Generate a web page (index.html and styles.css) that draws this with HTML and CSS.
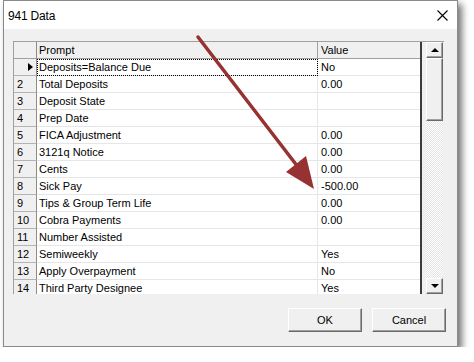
FILE: index.html
```html
<!DOCTYPE html>
<html lang="en">
<head>
  <meta charset="UTF-8">
  <title>941 Data</title>
  <link rel="stylesheet" href="styles.css">
</head>
<body>

  <div class="dialog">
    <div class="titlebar">
      <span class="title">941 Data</span>
      <svg class="close" width="11" height="11" viewBox="0 0 11 11">
        <path d="M0.5 0.5 L10.5 10.5 M10.5 0.5 L0.5 10.5" stroke="#000" stroke-width="1.1" fill="none"/>
      </svg>
    </div>

    <div class="dialog-body">
      <div class="grid">
        <div class="cells">
          <div class="row head">
            <div class="cell ind"></div>
            <div class="cell">Prompt</div>
            <div class="cell">Value</div>
          </div>
          <div class="row current">
            <div class="cell ind"><span class="pointer"></span></div>
            <div class="cell focus">Deposits=Balance Due</div>
            <div class="cell">No</div>
          </div>
          <div class="row"><div class="cell ind">2</div><div class="cell">Total Deposits</div><div class="cell">0.00</div></div>
          <div class="row"><div class="cell ind">3</div><div class="cell">Deposit State</div><div class="cell"></div></div>
          <div class="row"><div class="cell ind">4</div><div class="cell">Prep Date</div><div class="cell"></div></div>
          <div class="row"><div class="cell ind">5</div><div class="cell">FICA Adjustment</div><div class="cell">0.00</div></div>
          <div class="row"><div class="cell ind">6</div><div class="cell">3121q Notice</div><div class="cell">0.00</div></div>
          <div class="row"><div class="cell ind">7</div><div class="cell">Cents</div><div class="cell">0.00</div></div>
          <div class="row"><div class="cell ind">8</div><div class="cell">Sick Pay</div><div class="cell">-500.00</div></div>
          <div class="row"><div class="cell ind">9</div><div class="cell">Tips &amp; Group Term Life</div><div class="cell">0.00</div></div>
          <div class="row"><div class="cell ind">10</div><div class="cell">Cobra Payments</div><div class="cell">0.00</div></div>
          <div class="row"><div class="cell ind">11</div><div class="cell">Number Assisted</div><div class="cell"></div></div>
          <div class="row"><div class="cell ind">12</div><div class="cell">Semiweekly</div><div class="cell">Yes</div></div>
          <div class="row"><div class="cell ind">13</div><div class="cell">Apply Overpayment</div><div class="cell">No</div></div>
          <div class="row"><div class="cell ind">14</div><div class="cell">Third Party Designee</div><div class="cell">Yes</div></div>
        </div>
        <div class="split"></div>
        <div class="vscroll">
          <div class="sbtn"><span class="tri up"></span></div>
          <div class="thumb"></div>
          <div class="track"></div>
          <div class="sbtn"><span class="tri down"></span></div>
        </div>
      </div>

      <div class="buttons">
        <button type="button">OK</button>
        <button type="button">Cancel</button>
      </div>
    </div>
  </div>

  <!-- callout arrow drawn over the dialog -->
  <svg class="callout" width="474" height="362" viewBox="0 0 474 362">
    <line x1="198" y1="37" x2="298" y2="167" stroke="#973232" stroke-width="3.5" stroke-linecap="round"/>
    <polygon points="314,189 286,172 306,156" fill="#973232"/>
  </svg>

</body>
</html>
```

FILE: styles.css
```css
* {
  box-sizing: border-box;
}
body {
  margin: 0;
  background-color: #fff;
  font-family: "Liberation Sans", Arial, sans-serif;
  font-size: 11px;
  color: #000;
  position: relative;
}
.dialog {
  margin-left: 3px;
  width: 455px;
  height: 347px;
  border: 1px solid #8a8a8a;
  background-color: #f0f0f0;
  box-shadow: 4px 4px 7px rgba(0, 0, 0, 0.55);
}
.titlebar {
  height: 28px;
  background-color: #fff;
  display: flex;
  align-items: center;
  justify-content: space-between;
  padding: 0 9px 0 4px;
}
.title {
  font-family: "Segoe UI", "Liberation Sans", Arial, sans-serif;
  font-size: 12px;
  letter-spacing: -0.2px;
  padding-top: 1px;
}
.close {
  display: block;
  margin-top: 1px;
}
.dialog-body {
  padding: 12px 0 0 9px;
}
.grid {
  display: flex;
  border-top: 1px solid #a0a0a0;
  border-left: 1px solid #a0a0a0;
  height: 253px;
  width: 431px;
}
.cells {
  width: 406px;
  height: 252px;
  overflow: hidden;
  background-color: #fff;
}
.row {
  display: grid;
  grid-template-columns: 23px 281px 102px;
  height: 17px;
}
.cell {
  height: 17px;
  padding: 1px 0 0 3px;
  line-height: 15px;
  white-space: nowrap;
  border-bottom: 1px solid #e6e6e6;
  border-right: 1px solid #e6e6e6;
}
.cell:nth-child(2) {
  padding-left: 2px;
}
.cell:last-child {
  border-right: none;
}
.ind {
  background-color: #f0f0f0;
  border-bottom-color: #b4b4b4;
  border-right-color: #8c8c8c;
  padding-left: 3px;
  position: relative;
}
.head .cell {
  background-color: #f0f0f0;
  border-bottom-color: #a0a0a0;
  border-right-color: #a0a0a0;
}
.head .ind {
  border-right-color: #8c8c8c;
}
.focus {
  outline: 1px dotted #000;
  outline-offset: -1px;
}
.pointer {
  position: absolute;
  left: 14px;
  top: 4px;
  width: 0;
  height: 0;
  border-top: 4px solid transparent;
  border-bottom: 4px solid transparent;
  border-left: 5px solid #000;
}
.split {
  width: 2px;
  height: 252px;
  background-color: #3c3c3c;
  margin-right: 4px;
}
.vscroll {
  width: 17px;
  height: 252px;
  display: flex;
  flex-direction: column;
}
.sbtn, .thumb {
  background-color: #f0f0f0;
  border: 1px solid;
  border-color: #fff #6a6a6a #6a6a6a #fff;
  box-shadow: inset -1px -1px 0 #a0a0a0;
}
.sbtn {
  height: 16px;
  display: flex;
  align-items: center;
  justify-content: center;
}
.thumb {
  height: 63px;
}
.track {
  flex: 1;
  background: repeating-conic-gradient(#fff 0 25%, #e4e4e4 0 50%) 0 0 / 2px 2px;
}
.tri {
  width: 0;
  height: 0;
  border-left: 4px solid transparent;
  border-right: 4px solid transparent;
}
.tri.up {
  border-bottom: 4px solid #000;
}
.tri.down {
  border-top: 4px solid #000;
}
.buttons {
  display: flex;
  justify-content: flex-end;
  gap: 10px;
  margin-top: 14px;
  padding-right: 11px;
}
.buttons button {
  width: 74px;
  height: 24px;
  font-family: "Liberation Sans", Arial, sans-serif;
  font-size: 11px;
  color: #000;
  background-color: #f0f0f0;
  border: 1px solid;
  border-color: #fff #6a6a6a #6a6a6a #fff;
  box-shadow: inset -1px -1px 0 #a0a0a0;
  padding: 0;
}
.callout {
  position: absolute;
  left: 0;
  top: 0;
  pointer-events: none;
}
```
